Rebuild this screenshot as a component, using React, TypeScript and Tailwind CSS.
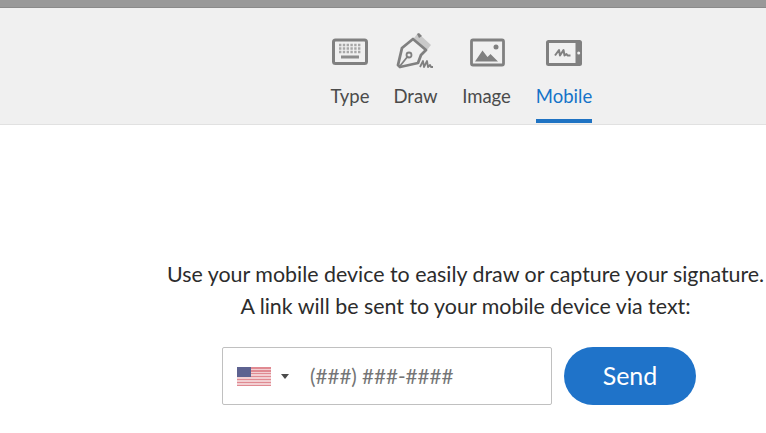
const tabs = [
  { label: 'Type', width: 'w-[38px]', icon: <KeyboardIcon /> },
  { label: 'Draw', width: 'w-[43px]', icon: <PenIcon /> },
  { label: 'Image', width: 'w-[49px]', icon: <ImageIcon /> },
  { label: 'Mobile', width: 'w-[56px]', icon: <TabletIcon />, active: true },
]

function KeyboardIcon() {
  return (
    <svg width="38" height="30" viewBox="0 0 38 30" fill="none">
      <rect x="2.500" y="3" width="33" height="23.500" rx="2" stroke="#808080" strokeWidth="3" fill="#f0f0f0" />
      <path d="M8 8h22M8 11.500h22M8 15h22" stroke="#a8a8a8" strokeWidth="2.400" strokeDasharray="2.400 1.400" />
      <rect x="10" y="18.500" width="18" height="3" fill="#8c8c8c" />
    </svg>
  )
}

function PenIcon() {
  return (
    <svg width="40" height="38" viewBox="0 0 40 38" fill="none">
      <path d="M22 0l13 12-4 5-13-12z" fill="#c9c9c9" />
      <path d="M21 1l2-1 3 3-3 2z" fill="#808080" />
      <path d="M15 8l15 12-5 3-3 6-19 5-1-2 3-15z" fill="#f0f0f0" />
      <path d="M17 6l13 11-5 5-3 8-18 4-2-2 4-17z" stroke="#808080" strokeWidth="2.800" strokeLinejoin="round" />
      <path d="M4 33l8-10" stroke="#808080" strokeWidth="1.800" />
      <circle cx="13" cy="22" r="2.500" stroke="#808080" strokeWidth="1.800" />
      <path d="M24 34l3-6 1 6 3-6 1 6 2-2 1 2h2" stroke="#808080" strokeWidth="1.800" strokeLinejoin="round" />
    </svg>
  )
}

function ImageIcon() {
  return (
    <svg width="36" height="30" viewBox="0 0 36 30" fill="none">
      <rect x="2.500" y="3" width="32" height="25" rx="1.500" stroke="#808080" strokeWidth="2.800" />
      <path d="M6 24.500l7.500-11 5 6.500 3-3 7.500 7.500z" fill="#808080" />
      <circle cx="27" cy="10" r="2.500" fill="#808080" />
    </svg>
  )
}

function TabletIcon() {
  return (
    <svg width="38" height="30" viewBox="0 0 38 30" fill="none">
      <rect x="1" y="3" width="36" height="26" rx="2.500" fill="#808080" />
      <rect x="4" y="6" width="26.500" height="20" fill="#f0f0f0" />
      <circle cx="33.700" cy="16" r="1.500" fill="#f0f0f0" />
      <path d="M10 18.500l4-5.500 1 5.500 3.500-5.500 1 5.500 2-1.500 1 1.500h3" stroke="#808080" strokeWidth="2" strokeLinejoin="round" />
    </svg>
  )
}

function Flag() {
  return (
    <div className="relative h-[19px] w-[34px] bg-[repeating-linear-gradient(180deg,#e08a92_0px,#e08a92_1.5px,#f2cfd2_1.5px,#f2cfd2_3px)]">
      <div className="absolute left-0 top-0 h-[10px] w-[14px] bg-[#5d6290]" />
    </div>
  )
}

export default function App() {
  return (
    <div className="h-[433px] w-[766px] overflow-hidden bg-white font-['Lato',sans-serif] text-[#2c2c2c]">
      <div className="h-2 border-b border-[#8a8a8a] bg-[#999999]" />
      <div className="flex h-[117px] gap-[25px] border-b border-[#e1e1e1] bg-[#f0f0f0] pl-[331px] pt-[25px]">
        {tabs.map((tab) => (
          <div key={tab.label} className={`flex flex-col items-center ${tab.width}`}>
            <div className="flex h-[38px] items-center">{tab.icon}</div>
            <div className={`mt-[12px] whitespace-nowrap text-[18.5px] leading-[26px] ${tab.active ? 'text-[#1473c8]' : 'text-[#4b4b4b]'}`}>
              {tab.label}
            </div>
            {tab.active && <div className="mt-[10px] h-1 w-[56px] bg-[#1f73c3]" />}
          </div>
        ))}
      </div>
      <div className="ml-[167px] mt-[133px] w-[597px] whitespace-nowrap text-center text-[21.4px] leading-[32px]">
        <p>Use your mobile device to easily draw or capture your signature.</p>
        <p>A link will be sent to your mobile device via text:</p>
      </div>
      <div className="ml-[222px] mt-[25px] flex gap-3">
        <div className="flex h-[58px] w-[330px] items-center rounded-[2px] border border-[#c0c0c0] pl-[14px]">
          <Flag />
          <div className="ml-[10px] h-0 w-0 border-x-4 border-t-[5px] border-x-transparent border-t-[#4b4b4b]" />
          <span className="ml-[21px] text-[20.6px] text-[#757575]">(###) ###-####</span>
        </div>
        <button className="h-[58px] w-[132px] rounded-full bg-[#1f73c9] text-[25px] text-white">Send</button>
      </div>
    </div>
  )
}
